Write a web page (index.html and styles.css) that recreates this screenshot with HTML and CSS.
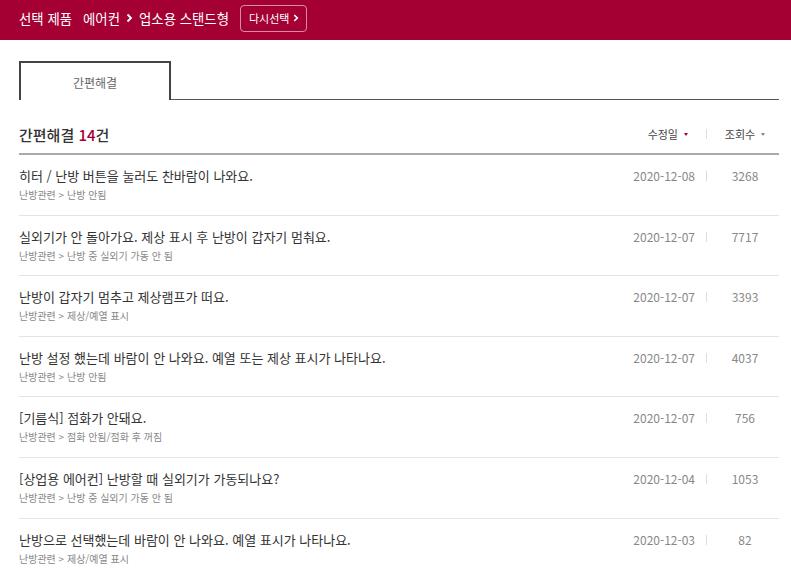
FILE: index.html
```html
<!DOCTYPE html>
<html lang="ko">
<head>
<meta charset="utf-8">
<link rel="stylesheet" href="styles.css">
</head>
<body>
<header class="topbar">
  <span class="tb-label">선택 제품</span>
  <span class="tb-path">에어컨 <svg class="chev" width="7" height="10" viewBox="0 0 7 10"><path d="M1.5 1.5 L5 5 L1.5 8.5" fill="none" stroke="#fff" stroke-width="1.8"/></svg> 업소용 스탠드형</span>
  <button class="reselect">다시선택 <svg class="chev-sm" width="6" height="8" viewBox="0 0 6 8"><path d="M1.3 1.2 L4.3 4 L1.3 6.8" fill="none" stroke="#fff" stroke-width="1.6"/></svg></button>
</header>

<main class="content">
  <div class="tabs">
    <div class="tab">간편해결</div>
  </div>

  <div class="list-head">
    <h2 class="list-title">간편해결 <em>14</em>건</h2>
    <div class="sorts">
      <span class="sort sort-date active">수정일 <i class="tri"></i></span>
      <span class="vsep"></span>
      <span class="sort sort-views">조회수 <i class="tri"></i></span>
    </div>
  </div>

  <ul class="rows">
    <li class="row">
      <div class="row-main"><p class="row-title">히터 / 난방 버튼을 눌러도 찬바람이 나와요.</p><p class="row-cat">난방관련 &gt; 난방 안됨</p></div>
      <span class="row-date">2020-12-08</span><span class="vsep"></span><span class="row-count">3268</span>
    </li>
    <li class="row">
      <div class="row-main"><p class="row-title">실외기가 안 돌아가요. 제상 표시 후 난방이 갑자기 멈춰요.</p><p class="row-cat">난방관련 &gt; 난방 중 실외기 가동 안 됨</p></div>
      <span class="row-date">2020-12-07</span><span class="vsep"></span><span class="row-count">7717</span>
    </li>
    <li class="row">
      <div class="row-main"><p class="row-title">난방이 갑자기 멈추고 제상램프가 떠요.</p><p class="row-cat">난방관련 &gt; 제상/예열 표시</p></div>
      <span class="row-date">2020-12-07</span><span class="vsep"></span><span class="row-count">3393</span>
    </li>
    <li class="row">
      <div class="row-main"><p class="row-title">난방 설정 했는데 바람이 안 나와요. 예열 또는 제상 표시가 나타나요.</p><p class="row-cat">난방관련 &gt; 난방 안됨</p></div>
      <span class="row-date">2020-12-07</span><span class="vsep"></span><span class="row-count">4037</span>
    </li>
    <li class="row">
      <div class="row-main"><p class="row-title">[기름식] 점화가 안돼요.</p><p class="row-cat">난방관련 &gt; 점화 안됨/점화 후 꺼짐</p></div>
      <span class="row-date">2020-12-07</span><span class="vsep"></span><span class="row-count">756</span>
    </li>
    <li class="row">
      <div class="row-main"><p class="row-title">[상업용 에어컨] 난방할 때 실외기가 가동되나요?</p><p class="row-cat">난방관련 &gt; 난방 중 실외기 가동 안 됨</p></div>
      <span class="row-date">2020-12-04</span><span class="vsep"></span><span class="row-count">1053</span>
    </li>
    <li class="row">
      <div class="row-main"><p class="row-title">난방으로 선택했는데 바람이 안 나와요. 예열 표시가 나타나요.</p><p class="row-cat">난방관련 &gt; 제상/예열 표시</p></div>
      <span class="row-date">2020-12-03</span><span class="vsep"></span><span class="row-count">82</span>
    </li>
  </ul>
</main>
</body>
</html>
```

FILE: styles.css
```css
* { box-sizing: border-box; }
html, body { margin: 0; padding: 0; background: #fff; }
body {
  font-family: "Noto Sans CJK KR", "Noto Sans", sans-serif;
  color: #333;
  overflow: hidden;
}

.topbar {
  height: 40px;
  background: #a50034;
  color: #fff;
  display: flex;
  align-items: center;
  padding: 0 0 4px 19px;
}
.tb-label { font-size: 13.4px; margin-right: 11px; }
.tb-path { font-size: 13.4px; display: inline-flex; align-items: center; gap: 6px; }
.chev { display: block; }
.reselect {
  margin-left: 11px;
  height: 27px;
  padding: 0 7px 0 8px;
  border: 1px solid rgba(255,255,255,0.55);
  border-radius: 4px;
  background: transparent;
  color: #fff;
  font-family: inherit;
  font-size: 11px;
  display: inline-flex;
  align-items: center;
  gap: 4px;
}

.content { padding: 0 12px 0 19px; }

.tabs {
  margin-top: 21px;
  display: flex;
  border-bottom: 1px solid #555;
}
.tab {
  width: 152px;
  height: 39px;
  margin-bottom: -1px;
  border: 2px solid #444;
  border-bottom: none;
  background: #fff;
  display: flex;
  align-items: center;
  justify-content: center;
  font-size: 12px;
  color: #666;
  padding-top: 1px;
}

.list-head {
  height: 55px;
  border-bottom: 2px solid #aaa;
  display: flex;
  align-items: center;
  justify-content: space-between;
  padding-top: 15px;
}
.list-title {
  margin: 0;
  font-size: 15px;
  font-weight: 500;
  color: #333;
}
.list-title em { font-style: normal; color: #a50034; }

.sorts { display: flex; align-items: center; }
.sort {
  font-size: 11px;
  color: #444;
  display: inline-flex;
  align-items: center;
  gap: 6px;
}
.sort-date { margin-right: 18px; }
.sort-views { width: 68px; margin-left: 4px; justify-content: center; }
.tri {
  width: 0; height: 0;
  border-left: 2.5px solid transparent;
  border-right: 2.5px solid transparent;
  border-top: 3px solid #888;
}
.sort.active .tri { border-top-color: #a50034; }

.vsep {
  width: 1px;
  height: 10px;
  background: #ddd;
  flex: none;
}

.rows { list-style: none; margin: 0; padding: 0; }
.row {
  display: flex;
  align-items: flex-start;
  padding: 12px 0 11.6px;
  border-bottom: 1px solid #e4e4e4;
}
.row-main { flex: 1; min-width: 0; }
.row-title {
  margin: 0;
  font-size: 13px;
  line-height: 18px;
  color: #333;
}
.row-cat {
  margin: 2px 0 0;
  font-size: 10px;
  line-height: 16px;
  color: #888;
}
.row-date {
  font-size: 12px;
  line-height: 18px;
  color: #888;
  margin-right: 11px;
}
.row .vsep { margin-top: 4px; }
.row-count {
  width: 68px;
  margin-left: 4px;
  text-align: center;
  font-size: 12px;
  line-height: 18px;
  color: #888;
}
```
